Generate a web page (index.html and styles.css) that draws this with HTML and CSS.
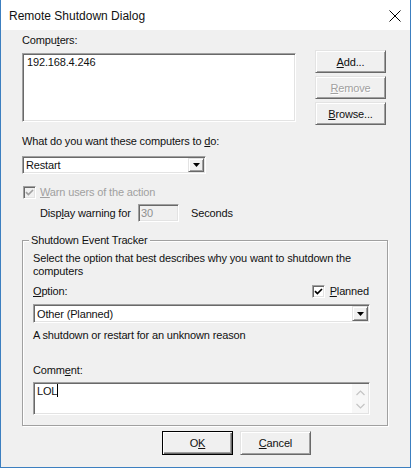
FILE: index.html
```html
<!DOCTYPE html>
<html>
<head>
<meta charset="utf-8">
<link rel="stylesheet" href="styles.css">
</head>
<body>
<div class="window">
  <div class="titlebar">
    <span class="title">Remote Shutdown Dialog</span>
    <svg class="close" width="12" height="12" viewBox="0 0 12 12"><path d="M0.5 0.5 L11.5 11.5 M11.5 0.5 L0.5 11.5" stroke="#000" stroke-width="1" fill="none"/></svg>
  </div>
  <div class="client">
    <div class="computers">
      <div class="list-col">
        <div class="label lbl-computers">Compu<u>t</u>ers:</div>
        <div class="listbox sunken">192.168.4.246</div>
      </div>
      <div class="btn-col">
        <div class="btn"><span><u>A</u>dd...</span></div>
        <div class="btn disabled"><span><u>R</u>emove</span></div>
        <div class="btn"><span><u>B</u>rowse...</span></div>
      </div>
    </div>

    <div class="label lbl-action">What do you want these computers to <u>d</u>o:</div>
    <div class="combo sunken combo-action">
      <span class="combo-text">Restart</span>
      <span class="combo-btn"><svg width="7" height="4" viewBox="0 0 7 4"><path d="M0 0 H7 L3.5 4 Z" fill="#000"/></svg></span>
    </div>

    <div class="check-row warn-check is-disabled">
      <span class="checkbox checkbox-disabled"><svg width="9" height="9" viewBox="0 0 9 9"><path d="M1 4.2 L3.4 6.6 L8 2" stroke="#a0a0a0" stroke-width="1.7" fill="none"/></svg></span>
      <span><u>W</u>arn users of the action</span>
    </div>

    <div class="warn-row">
      <span class="warn-label">Disp<u>l</u>ay warning for</span>
      <span class="numbox">30</span>
      <span class="seconds">Seconds</span>
    </div>

    <fieldset class="group">
      <legend>Shutdown Event Tracker</legend>
      <p class="desc">Select the option that best describes why you want to shutdown the<br>computers</p>
      <div class="option-row">
        <span><u>O</u>ption:</span>
        <span class="check-row">
          <span class="checkbox"><svg width="9" height="9" viewBox="0 0 9 9"><path d="M1 4.2 L3.4 6.6 L8 2" stroke="#000" stroke-width="1.7" fill="none"/></svg></span>
          <span class="planned"><u>P</u>lanned</span>
        </span>
      </div>
      <div class="combo sunken combo-option">
        <span class="combo-text">Other (Planned)</span>
        <span class="combo-btn"><svg width="7" height="4" viewBox="0 0 7 4"><path d="M0 0 H7 L3.5 4 Z" fill="#000"/></svg></span>
      </div>
      <div class="reason">A shutdown or restart for an unknown reason</div>
      <div class="label lbl-comment">Comm<u>e</u>nt:</div>
      <div class="textarea sunken">
        <div class="ta-text">LOL<span class="caret"></span></div>
        <div class="vscroll">
          <svg width="9" height="6" viewBox="0 0 9 6"><path d="M0.5 5 L4.5 1 L8.5 5" stroke="#c4c4c4" stroke-width="1.2" fill="none"/></svg>
          <svg width="9" height="6" viewBox="0 0 9 6"><path d="M0.5 1 L4.5 5 L8.5 1" stroke="#c4c4c4" stroke-width="1.2" fill="none"/></svg>
        </div>
      </div>
    </fieldset>

    <div class="footer">
      <div class="btn btn-footer default"><span>O<u>K</u></span></div>
      <div class="btn btn-footer"><span><u>C</u>ancel</span></div>
    </div>
  </div>
</div>
</body>
</html>
```

FILE: styles.css
```css
* { box-sizing: border-box; }

html, body {
  margin: 0;
  padding: 0;
  background: #ffffff;
}

body {
  font-family: "Liberation Sans", Arial, sans-serif;
  font-size: 11px;
  line-height: 14px;
  color: #111;
}

u { text-decoration: underline; text-underline-offset: 1px; }

.window {
  width: 411px;
  height: 468px;
  border-left: 1px solid #3c7fc0;
  border-right: 1px solid #3c7fc0;
  border-bottom: 1px solid #3c7fc0;
  display: flex;
  flex-direction: column;
  background: #f0f0f0;
}

.titlebar {
  height: 30px;
  flex: none;
  background: #ffffff;
  display: flex;
  align-items: center;
  justify-content: space-between;
  padding: 0 9px 0 8px;
}

.title {
  font-size: 12px;
  line-height: 16px;
  padding-top: 1px;
}

.close { display: block; margin-top: 1px; }

.client {
  flex: 1;
  padding-left: 21px;
  letter-spacing: -0.15px;
}

/* 3D borders */
.sunken {
  background: #fff;
  border: 1px solid;
  border-color: #a0a0a0 #ffffff #ffffff #a0a0a0;
  box-shadow: inset 1px 1px 0 #696969, inset -1px -1px 0 #e3e3e3;
}

.btn {
  width: 71px;
  height: 23px;
  background: #f0f0f0;
  border: 1px solid;
  border-color: #e3e3e3 #696969 #696969 #e3e3e3;
  box-shadow: inset 1px 1px 0 #ffffff, inset -1px -1px 0 #a0a0a0;
  display: flex;
  align-items: center;
  justify-content: center;
}

.btn.disabled {
  color: #a0a0a0;
  text-shadow: 1px 1px 0 #ffffff;
}

.btn.default {
  border-color: #000;
  box-shadow: inset 1px 1px 0 #ffffff, inset -1px -1px 0 #696969, inset -2px -2px 0 #a0a0a0;
}

/* Computers row */
.computers {
  display: flex;
  align-items: flex-start;
}

.lbl-computers { margin-top: 3px; }

.listbox {
  margin-top: 6px;
  width: 274px;
  height: 69px;
  padding: 1px 4px;
}

.btn-col {
  margin-left: 19px;
  margin-top: 20px;
  display: flex;
  flex-direction: column;
  gap: 3px;
}

.lbl-action { margin-top: 9px; }

/* Combo boxes */
.combo {
  height: 18px;
  display: flex;
  align-items: center;
  justify-content: space-between;
  padding: 1px 1px 1px 3px;
}

.combo-action { width: 184px; margin-top: 8px; }
.combo-option { width: 337px; height: 19px; margin-top: 6px; }

.combo-btn {
  width: 16px;
  height: 100%;
  background: #f0f0f0;
  border: 1px solid;
  border-color: #e3e3e3 #696969 #696969 #e3e3e3;
  box-shadow: inset 1px 1px 0 #ffffff, inset -1px -1px 0 #a0a0a0;
  display: flex;
  align-items: center;
  justify-content: center;
}

.combo-btn svg { display: block; }

/* Checkboxes */
.check-row {
  display: flex;
  align-items: center;
}

.checkbox {
  width: 13px;
  height: 13px;
  flex: none;
  background: #fff;
  border: 1px solid;
  border-color: #a0a0a0 #ffffff #ffffff #a0a0a0;
  box-shadow: inset 1px 1px 0 #696969, inset -1px -1px 0 #e3e3e3;
  display: flex;
  align-items: center;
  justify-content: center;
}

.checkbox svg { display: block; }

.checkbox-disabled { background: #f0f0f0; }

.warn-check {
  margin-top: 11px;
  padding-left: 1px;
  gap: 4px;
}

.is-disabled { color: #a0a0a0; }

.warn-row {
  margin-top: 5px;
  padding-left: 18px;
  display: flex;
  align-items: center;
}

.warn-label { width: 98px; }

.numbox {
  width: 41px;
  height: 18px;
  border: 1px solid;
  border-color: #a0a0a0 #ffffff #ffffff #a0a0a0;
  box-shadow: inset 1px 1px 0 #696969, inset -1px -1px 0 #e3e3e3;
  background: #f0f0f0;
  color: #8f8f8f;
  padding: 1px 2px;
  line-height: 14px;
}

.seconds { margin-left: 12px; }

/* Group box */
.group {
  margin: 11px 0 0 0;
  width: 366px;
  min-width: 0;
  padding: 0 17px 10px 10px;
  border: 1px solid #a0a0a0;
  box-shadow: inset 1px 1px 0 #ffffff, 1px 1px 0 #ffffff;
}

.group legend {
  margin-left: -4px;
  padding: 0 2px;
  line-height: 14px;
  background: #f0f0f0;
}

.desc {
  margin: 5px 0 0 0;
  line-height: 13px;
}

.option-row {
  margin-top: 6px;
  display: flex;
  align-items: center;
  justify-content: space-between;
}

.option-row .check-row { gap: 5px; margin-right: 1px; }

.reason { margin-top: 5px; }

.lbl-comment { margin-top: 21px; }

.textarea {
  margin-top: 5px;
  width: 337px;
  height: 33px;
  display: flex;
  padding: 1px;
}

.ta-text {
  flex: 1;
  padding: 0 2px;
  line-height: 14px;
}

.caret {
  display: inline-block;
  width: 1px;
  height: 13px;
  background: #000;
  vertical-align: -2px;
}

.vscroll {
  width: 16px;
  background: #f7f7f7;
  display: flex;
  flex-direction: column;
  align-items: center;
  justify-content: space-between;
  padding: 6px 0 4px;
}

.vscroll svg { display: block; }

/* Footer */
.footer {
  margin-top: 5px;
  padding-left: 140px;
  display: flex;
  gap: 7px;
}

.btn-footer { height: 24px; }
```
